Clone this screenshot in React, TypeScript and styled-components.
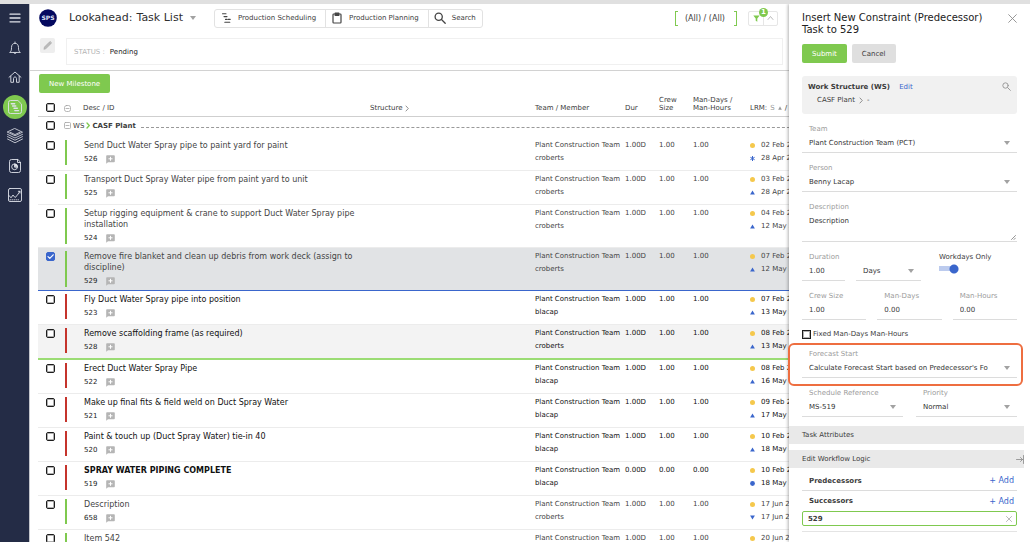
import React from "react";
import styled, { createGlobalStyle } from "styled-components";

const GREEN = "#7fc94f";
const BLUE = "#3a66cc";

const GlobalStyle = createGlobalStyle`
  * { box-sizing: border-box; }
  body { margin: 0; background: #fff; }
  body, button, input, select, textarea {
    font-family: Verdana, "DejaVu Sans", sans-serif;
    font-size: 7px;
    color: #3c3c3c;
  }
  button { border: 0; padding: 0; background: none; }
  a { text-decoration: none; color: ${BLUE}; }
`;

const Shell = styled.div`
  height: 100vh;
  display: flex;
  overflow: hidden;
  border-top: 4px solid #e0e0e0;
`;

const Sidebar = styled.nav`
  flex: none;
  width: 30px;
  background: #242c46;
  border-right: 1px solid #c4c6cc;
`;

const NavList = styled.div`
  height: 203px;
  padding-top: 2px;
  display: flex;
  flex-direction: column;
  align-items: center;
  justify-content: space-between;
`;

const NavButton = styled.button<{ $active?: boolean }>`
  width: 24px;
  height: 24px;
  border-radius: 12px;
  display: grid;
  place-items: center;
  background: ${(p) => (p.$active ? GREEN : "transparent")};
`;

const Line = styled.svg<{ $color?: string }>`
  display: block;
  fill: none;
  color: ${(p) => p.$color ?? "inherit"};
  stroke: currentColor;
  stroke-linecap: round;
  stroke-linejoin: round;
`;

const NavIcon = styled(Line)`
  width: 16px;
  height: 16px;
  color: #dfe2ea;
`;

const Main = styled.main`
  flex: 1;
  min-width: 0;
  overflow: hidden;
`;

const TopBar = styled.header`
  height: 28px;
  padding: 0 11px 0 9px;
  display: flex;
  align-items: center;
`;

const Logo = styled.svg`
  width: 18px;
  height: 18px;
  margin-right: 12px;
`;

const PageTitle = styled.h1`
  margin: 0;
  display: flex;
  gap: 4px;
  font-size: 11px;
  font-weight: 400;
  line-height: 14px;
  color: #2f2f2f;
  white-space: nowrap;
`;

const Caret = styled.span`
  width: 0;
  height: 0;
  border: 3px solid transparent;
  border-top: 4px solid #a2a2a2;
  border-bottom: 0;
`;

const TitleMenu = styled.button`
  margin: 0 18px 0 7px;
  display: flex;
`;

const Tabs = styled.div`
  height: 19px;
  display: flex;
  border: 1px solid #e2e2e2;
  border-radius: 3px;
`;

const Tab = styled.button`
  display: flex;
  align-items: center;
  gap: 6px;
  padding: 0 9px 0 5px;
  white-space: nowrap;
  & + & { border-left: 1px solid #e2e2e2; }
  &:last-child { padding-right: 6px; }
`;

const TabIcon = styled(Line)`
  width: 12px;
  height: 12px;
  color: #444;
`;

const Spacer = styled.div`
  flex: 1;
`;

const Scope = styled.button`
  height: 15px;
  display: flex;
  align-items: center;
  font-size: 8px;
  white-space: nowrap;
`;

const Bracket = styled.span<{ $side: "left" | "right" }>`
  width: 3px;
  height: 15px;
  border: 1px solid ${GREEN};
  ${(p) => (p.$side === "left" ? "border-right: 0; margin-right: 7px;" : "border-left: 0; margin-left: 9px;")}
`;

const FilterGroup = styled.div`
  height: 15px;
  margin: 0 0 0 11px;
  display: flex;
  border: 1px solid #e6e6e6;
  border-radius: 2px;
`;

const FilterButton = styled.button`
  position: relative;
  width: 14px;
  display: grid;
  place-items: center;
  & + & { border-left: 1px solid #e6e6e6; }
`;

const Badge = styled.span`
  position: absolute;
  z-index: 1;
  top: -4px;
  right: -5px;
  width: 9px;
  height: 9px;
  border-radius: 5px;
  background: ${GREEN};
  color: #fff;
  font-size: 7px;
  font-weight: 700;
  line-height: 9px;
  text-align: center;
`;

const FilterBar = styled.div`
  display: flex;
  align-items: flex-start;
  gap: 11px;
  padding: 6px 6px 5px 10px;
  border-bottom: 1px solid #d2d2d2;
`;

const EditButton = styled.button`
  width: 15px;
  height: 15px;
  display: grid;
  place-items: center;
  border-radius: 2px;
  background: #eee;
`;

const StatusBox = styled.div`
  flex: 1;
  height: 27px;
  padding: 0 7px;
  display: flex;
  align-items: center;
  gap: 5px;
  border: 1px solid #f0f0f0;
  color: #222;
  & > span { color: #b3b3b3; }
`;

const Button = styled.button<{ $tone: "green" | "grey" }>`
  height: 19px;
  padding: 0 10px;
  border-radius: 2px;
  font-size: 7px;
  background: ${(p) => (p.$tone === "green" ? GREEN : "#dfdfdf")};
  color: ${(p) => (p.$tone === "green" ? "#fff" : "#3c3c3c")};
`;

const Actions = styled.div`
  padding: 3px 9px 0;
`;

const TaskTable = styled.table`
  width: calc(100% + 43px);
  margin-left: 8px;
  table-layout: fixed;
  border-collapse: separate;
  border-spacing: 0;
`;

const Col = styled.col<{ $w?: number }>`
  ${(p) => (p.$w ? `width: ${p.$w}px;` : "")}
`;

const HeadCell = styled.th`
  height: 24px;
  padding: 0 0 4px;
  border-bottom: 1px solid #cfcfcf;
  vertical-align: bottom;
  text-align: left;
  font-weight: 400;
  line-height: 8px;
  white-space: nowrap;
`;

const Inline = styled.div<{ $gap?: number; $indent?: number }>`
  display: flex;
  align-items: center;
  gap: ${(p) => p.$gap ?? 4}px;
  padding-left: ${(p) => p.$indent ?? 0}px;
`;

const Muted = styled.span`
  color: #999;
`;

const Check = styled.input`
  appearance: none;
  flex: none;
  display: block;
  width: 9px;
  height: 9px;
  margin: 0 0 0 8px;
  border: 1px solid #1c1c1c;
  border-radius: 2px;
  background: #fff;
  box-shadow: inset 0 0 0 1px rgba(30, 30, 30, 0.35);
  &:checked {
    border-color: ${BLUE};
    box-shadow: none;
    background: ${BLUE};
  }
`;

const CheckWrap = styled.span`
  position: relative;
  display: block;
  width: 17px;
  margin-top: 1px;
`;

const Tick = styled(Line)`
  position: absolute;
  right: 0;
  top: 0;
  width: 9px;
  height: 9px;
  color: #fff;
  pointer-events: none;
`;

const GroupCell = styled.td`
  height: 20px;
  padding: 0 0 3px;
`;

const GroupRule = styled.span`
  flex: 1;
  margin: 4px 0 0 3px;
  border-top: 1px dashed #999;
`;

type Mark = "none" | "selected" | "hover";

const rowBorder = {
  none: "1px solid #ececec",
  selected: `1px solid ${BLUE}`,
  hover: "2px solid #9bdc74",
};

const rowFill = { none: "#fff", selected: "#e1e3e5", hover: "#f3f3f3" };

const TaskRow = styled.tr<{ $mark: Mark; $dark: boolean }>`
  color: ${(p) => (p.$dark ? "#111" : "#444")};
  & > td {
    height: ${(p) => (p.$mark === "hover" ? 35 : 34)}px;
    padding: 3px 0;
    vertical-align: top;
    line-height: 11px;
    background: ${(p) => rowFill[p.$mark]};
    border-bottom: ${(p) => rowBorder[p.$mark]};
  }
`;

const TaskInfo = styled.div<{ $line: "green" | "red" }>`
  margin-left: 1px;
  padding: 0 12px 0 17px;
  border-left: 2px solid ${(p) => (p.$line === "green" ? GREEN : "#c5342c")};
`;

const TaskName = styled.div<{ $bold?: boolean }>`
  margin-bottom: 3px;
  font-size: 8px;
  line-height: 11px;
  font-weight: ${(p) => (p.$bold ? 700 : 400)};
`;

const TaskId = styled.div`
  display: flex;
  align-items: center;
  gap: 9px;
  color: #222;
`;

const Stack = styled.div`
  display: grid;
  gap: 2px;
  white-space: nowrap;
`;

const Dated = styled.div`
  display: flex;
  align-items: center;
  gap: 6px;
`;

const Panel = styled.aside`
  position: relative;
  flex: none;
  width: 241px;
  padding: 8px 13px 0;
  background: #fff;
  box-shadow: -1px 0 3px rgba(0, 0, 0, 0.3);
`;

const PanelHead = styled.div`
  display: flex;
  justify-content: space-between;
  align-items: flex-start;
`;

const PanelTitle = styled.h2`
  margin: 0;
  width: 190px;
  font-size: 10px;
  line-height: 12px;
  font-weight: 400;
  color: #222;
`;

const CloseButton = styled.button`
  padding: 2px 0;
`;

const PanelActions = styled.div`
  display: flex;
  gap: 5px;
  margin: 8px 0 13px;
`;

const Structure = styled.section`
  height: 38px;
  padding: 6px;
  display: flex;
  justify-content: space-between;
  align-items: flex-start;
  border-radius: 3px;
  background: #f1f1f1;
`;

const StructureText = styled.div`
  line-height: 11px;
  white-space: nowrap;
  & > p { margin: 2px 0 0 9px; }
  & a { margin-left: 7px; }
`;

const FieldRow = styled.div<{ $cols: string; $gap: number }>`
  display: grid;
  grid-template-columns: ${(p) => p.$cols};
  column-gap: ${(p) => p.$gap}px;
`;

const FieldBox = styled.div`
  position: relative;
  min-width: 0;
  padding: 10px 0 1px;
  border-bottom: 1px solid #dcdcdc;
`;

const Label = styled.label`
  display: block;
  padding-left: 7px;
  line-height: 11px;
  color: #9b9b9b;
`;

const BlankLabel = styled.div`
  height: 11px;
`;

const Control = styled.div`
  display: flex;
  align-items: center;
  padding-right: 7px;
`;

const TextInput = styled.input`
  width: 100%;
  min-width: 0;
  height: 16px;
  padding: 0 0 0 7px;
  border: 0;
  background: none;
`;

const Select = styled.select`
  appearance: none;
  flex: 1;
  min-width: 0;
  height: 16px;
  padding: 0 8px 0 7px;
  border: 0;
  background: none;
  color: #333;
`;

const TextArea = styled.textarea`
  display: block;
  width: 100%;
  height: 27px;
  padding: 3px 7px;
  border: 0;
  line-height: 10px;
  resize: none;
  color: #333;
`;

const Grip = styled(Line)`
  position: absolute;
  right: 1px;
  bottom: 1px;
  width: 5px;
  height: 5px;
  color: #666;
`;

const SwitchField = styled.label`
  padding-top: 10px;
  line-height: 11px;
  white-space: nowrap;
`;

const Switch = styled.input`
  appearance: none;
  display: block;
  width: 21px;
  height: 10px;
  margin: 1px 0 0;
  background:
    radial-gradient(circle at 15px 5px, ${BLUE} 0 4px, transparent 5px),
    linear-gradient(#bccbee, #bccbee) 0 2px / 14px 5px no-repeat;
`;

const FixedRow = styled.label`
  display: flex;
  align-items: center;
  gap: 2px;
  height: 19px;
  padding-top: 9px;
  & > input {
    margin-left: 0;
    border-radius: 0;
  }
`;

const Ring = styled.div`
  position: absolute;
  inset: 4px -6px -9px -14px;
  border: 2px solid #ee6e40;
  border-radius: 6px;
  pointer-events: none;
`;

const Section = styled.h3`
  display: flex;
  align-items: center;
  justify-content: space-between;
  height: 18px;
  margin: 0 -7px 6px -13px;
  padding-left: 13px;
  background: #e9e9e9;
  font-size: 7px;
  font-weight: 400;
  &:last-child { margin-bottom: 0; }
`;

const Sections = styled.div`
  margin-top: 9px;
`;

const LinkHead = styled.div<{ $line?: boolean }>`
  display: flex;
  align-items: center;
  justify-content: space-between;
  height: ${(p) => (p.$line ? 23 : 20)}px;
  padding: ${(p) => (p.$line ? 3 : 0)}px 3px 0 7px;
  border-bottom: ${(p) => (p.$line ? "1px solid #dcdcdc" : "0")};
  & > a { font-size: 8px; }
`;

const LinkItem = styled.div`
  display: flex;
  align-items: center;
  height: 15px;
  padding: 0 4px 0 5px;
  border: 1px solid ${GREEN};
  border-radius: 2px;
  justify-content: space-between;
`;

const ListEnd = styled.div`
  height: 6px;
  border-bottom: 1px solid #e4e4e4;
`;

function Collapse({ round }: { round?: boolean }) {
  return (
    <Line width="7" height="7" viewBox="0 0 7 7" $color="#a5a5a5" strokeWidth="0.8">
      <rect x="0.5" y="0.5" width="6" height="6" rx={round ? 2 : 1} />
      <path d="M2 3.5h3" />
    </Line>
  );
}

function Chevron({ color = "#777", heavy }: { color?: string; heavy?: boolean }) {
  return (
    <Line width="4" height="7" viewBox="0 0 4 7" $color={color} strokeWidth={heavy ? 1.3 : 0.8}>
      <path d="M1 1l2.3 2.5L1 6" />
    </Line>
  );
}

function Cross({ size }: { size: number }) {
  return (
    <Line width={size} height={size} viewBox="0 0 8 8" $color="#8c8c8c" strokeWidth="0.8">
      <path d="M0.6 0.6l6.8 6.8M7.4 0.6L0.6 7.4" />
    </Line>
  );
}

function Magnifier({ size, color }: { size: number; color: string }) {
  return (
    <Line width={size} height={size} viewBox="0 0 12 12" $color={color} strokeWidth="1.3">
      <circle cx="4.7" cy="4.7" r="3.6" />
      <path d="M7.5 7.5l3.7 3.7" />
    </Line>
  );
}

function CommentPlus() {
  return (
    <svg width="9" height="9" viewBox="0 0 9 9">
      <path d="M1 0.3h7a.8.8 0 0 1 .8.8v5.4a.8.8 0 0 1-.8.8H2L.2 8.8V1.1A.8.8 0 0 1 1 .3z" fill="#b5b5b5" />
      <path d="M4.5 1.8v4M2.5 3.8h4" stroke="#fff" strokeWidth="1" />
    </svg>
  );
}

type Shape = "dot" | "star" | "up" | "down" | "round";

function Marker({ shape }: { shape: Shape }) {
  return (
    <svg width="5" height="5" viewBox="0 0 5 5">
      {shape === "dot" && <circle cx="2.5" cy="2.5" r="2.5" fill="#f5c84c" />}
      {shape === "round" && <circle cx="2.5" cy="2.5" r="2.4" fill={BLUE} />}
      {shape === "up" && <path d="M2.5 0.4L4.9 4.6H.1z" fill={BLUE} />}
      {shape === "down" && <path d="M2.5 4.6L4.9.4H.1z" fill={BLUE} />}
      {shape === "star" && (
        <path d="M2.5 0v5M.4 1.3l4.2 2.4M4.6 1.3L.4 3.7" stroke={BLUE} strokeWidth="1" />
      )}
    </svg>
  );
}

type Task = {
  id: string;
  name: string;
  member: string;
  amount?: string;
  line: "green" | "red";
  start: string;
  end: string;
  shape?: Shape;
  mark?: Mark;
  dark?: boolean;
  bold?: boolean;
};

const tasks: Task[] = [
  { id: "526", name: "Send Duct Water Spray pipe to paint yard for paint", member: "croberts", line: "green", start: "02 Feb 2", end: "28 Apr 2", shape: "star" },
  { id: "525", name: "Transport Duct Spray Water pipe from paint yard to unit", member: "croberts", line: "green", start: "03 Feb 2", end: "28 Apr 2" },
  { id: "524", name: "Setup rigging equipment & crane to support Duct Water Spray pipe installation", member: "croberts", line: "green", start: "04 Feb 2", end: "12 May 2" },
  { id: "529", name: "Remove fire blanket and clean up debris from work deck (assign to discipline)", member: "croberts", line: "green", start: "07 Feb 2", end: "12 May 2", mark: "selected" },
  { id: "523", name: "Fly Duct Water Spray pipe into position", member: "blacap", line: "red", start: "07 Feb 2", end: "13 May 2", dark: true },
  { id: "528", name: "Remove scaffolding frame (as required)", member: "croberts", line: "red", start: "08 Feb 2", end: "13 May 2", mark: "hover", dark: true },
  { id: "522", name: "Erect Duct Water Spray Pipe", member: "blacap", line: "red", start: "08 Feb 2", end: "16 May 2", dark: true },
  { id: "521", name: "Make up final fits & field weld on Duct Spray Water", member: "blacap", line: "red", start: "09 Feb 2", end: "17 May 2", dark: true },
  { id: "520", name: "Paint & touch up (Duct Spray Water) tie-in 40", member: "blacap", line: "red", start: "10 Feb 2", end: "18 May 2", dark: true },
  { id: "519", name: "SPRAY WATER PIPING COMPLETE", member: "blacap", amount: "0.00", line: "red", start: "10 Feb 2", end: "18 May 2", shape: "round", dark: true, bold: true },
  { id: "658", name: "Description", member: "croberts", line: "green", start: "17 Jun 2", end: "17 Jun 2", shape: "down" },
  { id: "542", name: "Item 542", member: "croberts", line: "green", start: "20 Jun 2", end: "20 Jun 2" },
];

function Row({ task }: { task: Task }) {
  const amount = task.amount ?? "1.00";
  const selected = task.mark === "selected";
  return (
    <TaskRow $mark={task.mark ?? "none"} $dark={!!task.dark}>
      <td>
        <CheckWrap>
          <Check type="checkbox" aria-label={`Select ${task.id}`} defaultChecked={selected} />
          {selected && (
            <Tick viewBox="0 0 9 9" strokeWidth="1.2">
              <path d="M2 4.6l1.8 1.8L7.2 2.8" />
            </Tick>
          )}
        </CheckWrap>
      </td>
      <td>
        <TaskInfo $line={task.line}>
          <TaskName $bold={task.bold}>{task.name}</TaskName>
          <TaskId>
            {task.id}
            <CommentPlus />
          </TaskId>
        </TaskInfo>
      </td>
      <td />
      <td>
        <Stack>
          <span>Plant Construction Team</span>
          <span>{task.member}</span>
        </Stack>
      </td>
      <td>{amount}D</td>
      <td>{amount}</td>
      <td>{amount}</td>
      <td>
        <Stack>
          <Dated>
            <Marker shape="dot" />
            {task.start}
          </Dated>
          <Dated>
            <Marker shape={task.shape ?? "up"} />
            {task.end}
          </Dated>
        </Stack>
      </td>
    </TaskRow>
  );
}

function SelectField({ id, label, value, ring }: { id: string; label?: string; value: string; ring?: boolean }) {
  return (
    <FieldBox>
      {label ? <Label htmlFor={id}>{label}</Label> : <BlankLabel />}
      <Control>
        <Select id={id} aria-label={label ? undefined : "Duration unit"}>
          <option>{value}</option>
        </Select>
        <Caret />
      </Control>
      {ring && <Ring />}
    </FieldBox>
  );
}

function InputField({ id, label, value }: { id: string; label: string; value: string }) {
  return (
    <FieldBox>
      <Label htmlFor={id}>{label}</Label>
      <TextInput id={id} defaultValue={value} />
    </FieldBox>
  );
}

function Navigation() {
  return (
    <Sidebar>
      <NavList>
        <NavButton aria-label="Menu">
          <NavIcon viewBox="0 0 16 16" strokeWidth="1.3">
            <path d="M3 4.2h10M3 8h10M3 11.8h10" />
          </NavIcon>
        </NavButton>
        <NavButton aria-label="Notifications">
          <NavIcon viewBox="0 0 16 16" strokeWidth="0.9">
            <path d="M3 12.2c1.3-1 1.5-2.2 1.5-4.7 0-2.6 1.4-4.2 3.5-4.2s3.5 1.6 3.5 4.2c0 2.5.2 3.7 1.5 4.7zM8 3.2V2M6.7 12.5c.2 1.5 2.4 1.5 2.6 0" />
          </NavIcon>
        </NavButton>
        <NavButton aria-label="Home">
          <NavIcon viewBox="0 0 16 16" strokeWidth="0.9">
            <path d="M2 8.3L8 3l6 5.3M3.8 7.2v6.1h2.7V9.5c0-2 3-2 3 0v3.8h2.7V7.2" />
          </NavIcon>
        </NavButton>
        <NavButton aria-label="Schedule" $active>
          <NavIcon viewBox="0 0 16 16" strokeWidth="0.9">
            <path d="M10.5 1.5h-7a2 2 0 0 0-2 2v9a2 2 0 0 0 2 2h9a2 2 0 0 0 2-2v-7z" />
            <path d="M4.3 4.7h3.4M5.6 7h3.2M7 9.3h3.3M7.8 11.6h3.7" strokeWidth="1.4" />
          </NavIcon>
        </NavButton>
        <NavButton aria-label="Layers">
          <NavIcon viewBox="0 0 16 16" strokeWidth="0.8">
            <path d="M8 .6l7.5 3.6L8 7.8.5 4.2zM.5 6.4L8 10l7.5-3.6M.5 8.6L8 12.2l7.5-3.6M.5 11L8 14.8l7.5-3.8M3 4.2L8 6.6l5-2.4" />
          </NavIcon>
        </NavButton>
        <NavButton aria-label="Reports">
          <NavIcon viewBox="0 0 16 16" strokeWidth="0.9">
            <path d="M10.5 1.5h-6a2 2 0 0 0-2 2v9a2 2 0 0 0 2 2h7a2 2 0 0 0 2-2v-8zM10.5 1.5v3h3" />
            <circle cx="7.6" cy="8.8" r="2.9" />
            <path d="M7.6 8.8V5.9a2.9 2.9 0 0 1 2.9 2.9z" fill="currentColor" />
          </NavIcon>
        </NavButton>
        <NavButton aria-label="Analytics">
          <NavIcon viewBox="0 0 16 16" strokeWidth="0.9">
            <rect x="1.5" y="1.5" width="13" height="13" rx="1.5" />
            <path d="M2 8.5l2 2.3L6 8l2 2.5 2-1.8 3-4.5M11.3 4.3H13v1.8" />
            <path d="M3 12.8h10" strokeDasharray="0.5 1.5" />
          </NavIcon>
        </NavButton>
      </NavList>
    </Sidebar>
  );
}

function Header() {
  return (
    <TopBar>
      <Logo viewBox="0 0 18 18">
        <circle cx="9" cy="9" r="8.8" fill="#04095f" />
        <text x="9" y="11.4" textAnchor="middle" fontSize="6" fontWeight="700" fill="#dfe2f5">
          SPS
        </text>
      </Logo>
      <PageTitle>
        <span>Lookahead:</span>
        <span>Task List</span>
      </PageTitle>
      <TitleMenu aria-label="Switch view">
        <Caret />
      </TitleMenu>
      <Tabs>
        <Tab>
          <TabIcon viewBox="0 0 12 12" strokeWidth="1.1">
            <path d="M2.5 1.8h3.5M4 4.6h3M5.5 7.4h1.5M4.8 10.2h5M8.2 7.4h2" />
          </TabIcon>
          Production Scheduling
        </Tab>
        <Tab>
          <TabIcon viewBox="0 0 12 12" strokeWidth="1.2">
            <rect x="2" y="2" width="8" height="9" rx="0.8" />
            <path d="M4.2 1.2h3.6v2.2H4.2z" fill="currentColor" />
          </TabIcon>
          Production Planning
        </Tab>
        <Tab>
          <Magnifier size={12} color="#444" />
          Search
        </Tab>
      </Tabs>
      <Spacer />
      <Scope>
        <Bracket $side="left" />
        (All) / (All)
        <Bracket $side="right" />
      </Scope>
      <FilterGroup>
        <FilterButton aria-label="Filters">
          <svg width="7" height="7" viewBox="0 0 7 7">
            <path d="M.3.5h6.4L4.3 3.5v3.2L2.7 5.7V3.5z" fill={GREEN} />
          </svg>
          <Badge>1</Badge>
        </FilterButton>
        <FilterButton aria-label="Hide filters">
          <Line width="7" height="4" viewBox="0 0 7 4" $color="#aaa" strokeWidth="0.8">
            <path d="M1 3.5l2.5-3L6 3.5" />
          </Line>
        </FilterButton>
      </FilterGroup>
    </TopBar>
  );
}

function ConstraintPanel() {
  return (
    <Panel>
      <PanelHead>
        <PanelTitle>Insert New Constraint (Predecessor) Task to 529</PanelTitle>
        <CloseButton aria-label="Close">
          <Cross size={9} />
        </CloseButton>
      </PanelHead>
      <PanelActions>
        <Button $tone="green">Submit</Button>
        <Button $tone="grey">Cancel</Button>
      </PanelActions>
      <Structure>
        <StructureText>
          <b>Work Structure (WS)</b> <a href="#structure">Edit</a>
          <Inline as="p" $gap={4}>
            CASF Plant <Chevron /> -
          </Inline>
        </StructureText>
        <Magnifier size={9} color="#999" />
      </Structure>
      <SelectField id="team" label="Team" value="Plant Construction Team (PCT)" />
      <SelectField id="person" label="Person" value="Benny Lacap" />
      <FieldBox>
        <Label htmlFor="description">Description</Label>
        <TextArea id="description" defaultValue="Description" />
        <Grip viewBox="0 0 5 5" strokeWidth="0.7">
          <path d="M.5 4.5l4-4M3 4.5L4.5 3" />
        </Grip>
      </FieldBox>
      <FieldRow $cols="43px 65px 1fr" $gap={11}>
        <InputField id="duration" label="Duration" value="1.00" />
        <SelectField id="unit" value="Days" />
        <SwitchField>
          <Inline $indent={7}>Workdays Only</Inline>
          <Inline $indent={7}>
            <Switch type="checkbox" role="switch" defaultChecked />
          </Inline>
        </SwitchField>
      </FieldRow>
      <FieldRow $cols="1fr 1fr 1fr" $gap={11}>
        <InputField id="crew" label="Crew Size" value="1.00" />
        <InputField id="days" label="Man-Days" value="0.00" />
        <InputField id="hours" label="Man-Hours" value="0.00" />
      </FieldRow>
      <FixedRow>
        <Check type="checkbox" />
        Fixed Man-Days Man-Hours
      </FixedRow>
      <SelectField id="forecast" label="Forecast Start" value="Calculate Forecast Start based on Predecessor's Fo" ring />
      <FieldRow $cols="1fr 1fr" $gap={13}>
        <SelectField id="reference" label="Schedule Reference" value="MS-519" />
        <SelectField id="priority" label="Priority" value="Normal" />
      </FieldRow>
      <Sections>
        <Section>Task Attributes</Section>
        <Section>
          Edit Workflow Logic
          <Line width="8" height="9" viewBox="0 0 8 9" $color="#888" strokeWidth="0.8">
            <path d="M.5 4.5h6M4.5 2.5l2 2-2 2M7.5.5v8" />
          </Line>
        </Section>
      </Sections>
      <LinkHead $line>
        <b>Predecessors</b>
        <a href="#predecessors">+ Add</a>
      </LinkHead>
      <LinkHead>
        <b>Successors</b>
        <a href="#successors">+ Add</a>
      </LinkHead>
      <LinkItem>
        <b>529</b>
        <button aria-label="Remove 529">
          <Cross size={6} />
        </button>
      </LinkItem>
      <ListEnd />
    </Panel>
  );
}

export default function App() {
  return (
    <>
      <GlobalStyle />
      <Shell>
        <Navigation />
        <Main>
          <Header />
          <FilterBar>
            <EditButton aria-label="Edit filter">
              <Line width="9" height="9" viewBox="0 0 9 9" $color="#999" strokeWidth="0.5">
                <path d="M1 8l.4-2L6 1.4 7.6 3 3 7.6zM6.6.9l.7-.4L8.5 1.7l-.4.7z" fill="#bbb" />
              </Line>
            </EditButton>
            <StatusBox>
              <span>STATUS :</span> Pending
            </StatusBox>
          </FilterBar>
          <Actions>
            <Button $tone="green">New Milestone</Button>
          </Actions>
          <TaskTable>
            <colgroup>
              <Col $w={26} />
              <Col $w={306} />
              <Col />
              <Col $w={90} />
              <Col $w={34} />
              <Col $w={34} />
              <Col $w={57} />
              <Col $w={90} />
            </colgroup>
            <thead>
              <tr>
                <HeadCell>
                  <Check type="checkbox" aria-label="Select all" />
                </HeadCell>
                <HeadCell>
                  <Inline $gap={12}>
                    <Collapse round />
                    Desc / ID
                  </Inline>
                </HeadCell>
                <HeadCell>
                  <Inline $gap={2}>
                    Structure <Chevron />
                  </Inline>
                </HeadCell>
                <HeadCell>Team / Member</HeadCell>
                <HeadCell>Dur</HeadCell>
                <HeadCell>
                  Crew
                  <br />
                  Size
                </HeadCell>
                <HeadCell>
                  Man-Days /
                  <br />
                  Man-Hours
                </HeadCell>
                <HeadCell>
                  <Inline $gap={3}>
                    LRM: <Muted>S</Muted>
                    <svg width="4" height="4" viewBox="0 0 4 4">
                      <path d="M2 .3L3.8 3.7H.2z" fill="#999" />
                    </svg>
                    /
                  </Inline>
                </HeadCell>
              </tr>
            </thead>
            <tbody>
              <tr>
                <GroupCell>
                  <Check type="checkbox" aria-label="Select CASF Plant" />
                </GroupCell>
                <GroupCell colSpan={7}>
                  <Inline $gap={2}>
                    <Collapse />
                    WS
                    <Chevron color={GREEN} heavy />
                    <b>CASF Plant</b>
                    <GroupRule />
                  </Inline>
                </GroupCell>
              </tr>
              {tasks.map((task) => (
                <Row key={task.id} task={task} />
              ))}
            </tbody>
          </TaskTable>
        </Main>
        <ConstraintPanel />
      </Shell>
    </>
  );
}
